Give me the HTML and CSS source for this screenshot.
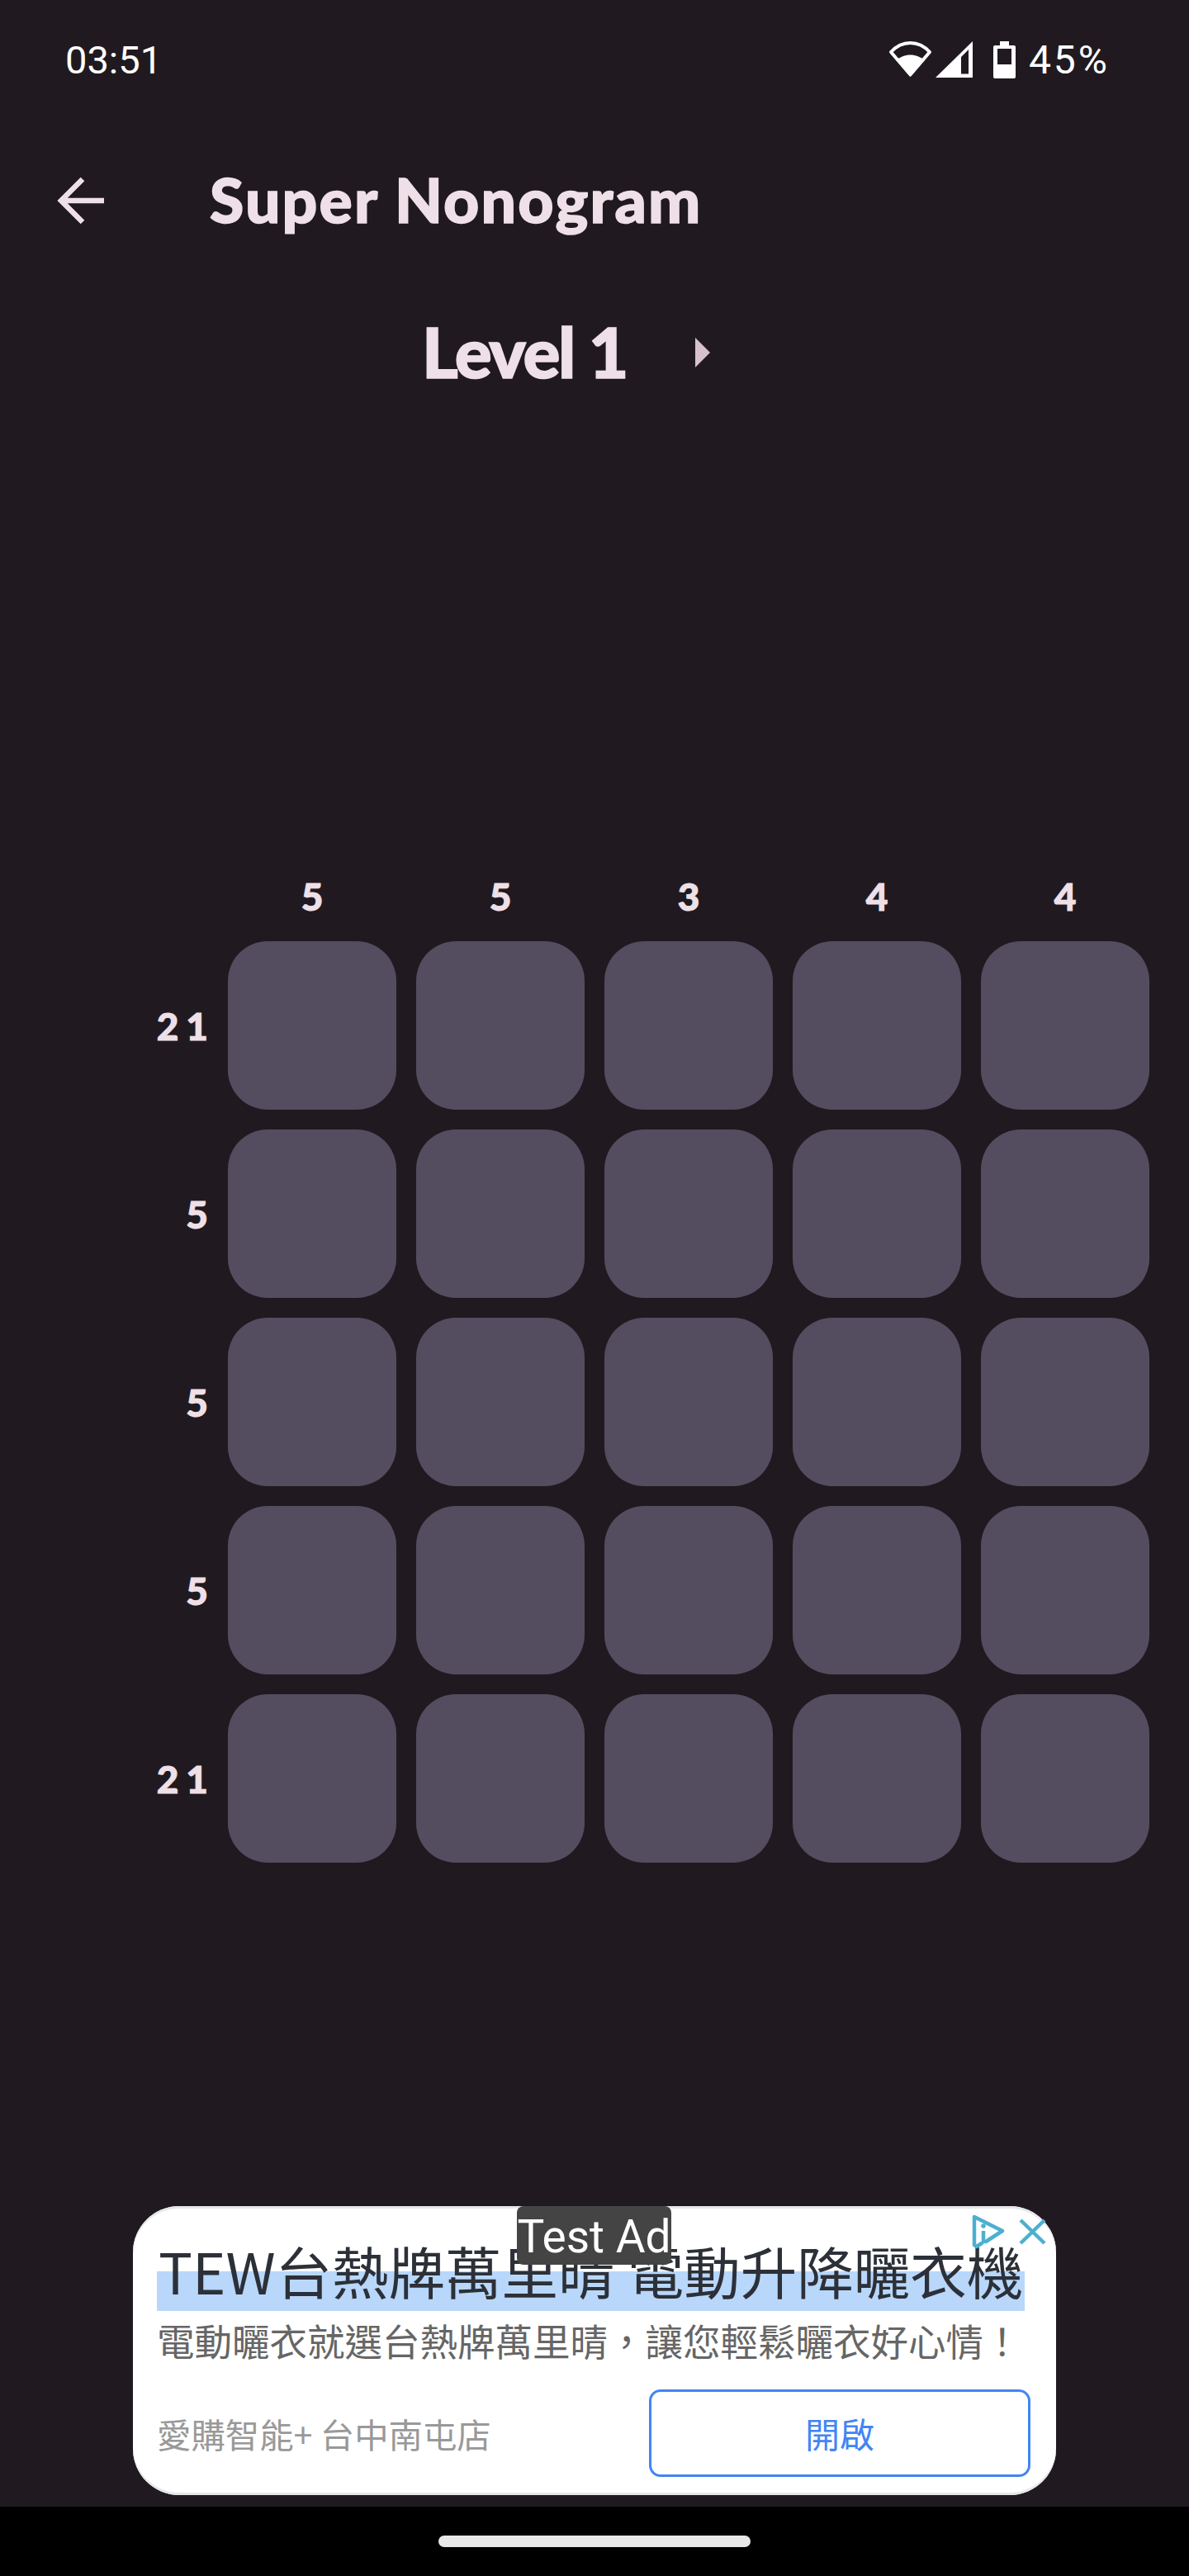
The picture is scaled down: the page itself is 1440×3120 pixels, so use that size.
FILE: index.html
```html
<!DOCTYPE html>
<html>

<head>
    <meta name="viewport" content="width=device-width, initial-scale=1, user-scalable=no"/>
    <link rel="stylesheet" href="styles.css">
</head>

<body>
    <div class="status-bar">
        <span class="clock">03:51</span>
        <div class="status-icons">
            <svg class="icon-wifi" width="53" height="44" viewBox="0 0 53 44">
                <path d="M26.5 40.5 3 13C9 6.500 17.500 2 26.500 2S44 6.500 50 13Z" fill="none" stroke="#fff" stroke-width="4" stroke-linejoin="round"/>
                <path d="M26.500 43 9.500 23C14 19 20 16.500 26.500 16.500S39 19 43.500 23Z" fill="#fff"/>
            </svg>
            <svg class="icon-signal" width="45" height="44" viewBox="0 0 45 44">
                <path d="M0 44 45 0V44ZM31 39.500H40V10L31 19Z" fill="#fff" fill-rule="evenodd"/>
            </svg>
            <svg class="icon-battery" width="27" height="45" viewBox="0 0 27 45">
                <path d="M8 0h11v5h6a2 2 0 0 1 2 2v36a2 2 0 0 1-2 2H2a2 2 0 0 1-2-2V7a2 2 0 0 1 2-2h6Z" fill="#fff"/>
                <rect x="5" y="9" width="17" height="19" fill="#201a20"/>
            </svg>
            <span class="battery-text">45%</span>
        </div>
    </div>

    <header class="app-bar">
        <svg class="back" width="58" height="58" viewBox="0 0 58 58">
            <path d="M57 29H5M31 3 5 29l26 26" fill="none" stroke="#efe0e8" stroke-width="6.500"/>
        </svg>
        <h1>Super Nonogram</h1>
    </header>

    <div class="level-row">
        <span class="level">Level 1</span>
        <span class="next"></span>
    </div>

    <main class="board">
        <div class="col-hints">
            <span>5</span>
            <span>5</span>
            <span>3</span>
            <span>4</span>
            <span>4</span>
        </div>
        <div class="row"><span class="hint">2 1</span><i></i><i></i><i></i><i></i><i></i></div>
        <div class="row"><span class="hint">5</span><i></i><i></i><i></i><i></i><i></i></div>
        <div class="row"><span class="hint">5</span><i></i><i></i><i></i><i></i><i></i></div>
        <div class="row"><span class="hint">5</span><i></i><i></i><i></i><i></i><i></i></div>
        <div class="row"><span class="hint">2 1</span><i></i><i></i><i></i><i></i><i></i></div>
    </main>

    <section class="ad">
        <div class="ad-label">Test Ad</div>
        <div class="ad-marks">
            <svg width="40" height="42" viewBox="0 0 40 42">
                <path d="M17 33 37 20 3 3V37L5.500 39 12 35" fill="none" stroke="#4cb0d0" stroke-width="4.500" stroke-linejoin="round" stroke-linecap="round"/>
                <circle cx="14" cy="14" r="2.800" fill="#4cb0d0"/>
                <path d="M14 20V35" stroke="#4cb0d0" stroke-width="4.500"/>
            </svg>
            <svg width="33" height="32" viewBox="0 0 33 32">
                <path d="M2 2 31 30M31 2 2 30" stroke="#4cb0d0" stroke-width="4.500"/>
            </svg>
        </div>
        <div class="ad-title">TEW台熱牌萬里晴 電動升降曬衣機</div>
        <div class="ad-desc">電動曬衣就選台熱牌萬里晴，讓您輕鬆曬衣好心情！</div>
        <div class="ad-foot">
            <span class="ad-store">愛購智能+ 台中南屯店</span>
            <span class="ad-btn">開啟</span>
        </div>
    </section>

    <div class="nav-bar"><span class="pill"></span></div>
</body>

</html>
```
FILE: styles.css
```css
* {
    box-sizing: border-box;
}

html, body {
    margin: 0;
    padding: 0;
}

body {
    width: 1440px;
    height: 3120px;
    display: flex;
    flex-direction: column;
    background: #201a20;
    color: #efe0e8;
    font-family: "Lato", "Liberation Sans", sans-serif;
}

.status-bar {
    height: 144px;
    padding: 0 96px 0 79px;
    display: flex;
    justify-content: space-between;
    align-items: center;
    color: #fff;
    font-family: "Roboto", sans-serif;
    font-size: 47px;
}

.status-icons {
    display: flex;
    align-items: center;
}

.icon-signal {
    margin-left: 4px;
}

.icon-battery {
    margin: 0 16px 0 25px;
}

.battery-text {
    font-size: 48px;
    letter-spacing: 3px;
}

.app-bar {
    height: 198px;
    padding-left: 69px;
    display: flex;
    align-items: center;
}

.app-bar h1 {
    margin: 0 0 4px 127px;
    font-size: 75px;
    font-weight: 900;
    letter-spacing: 2.200px;
    -webkit-text-stroke: 1.500px #efe0e8;
}

.level-row {
    height: 170px;
    padding-left: 511px;
    display: flex;
    align-items: center;
    gap: 83px;
}

.level {
    margin-bottom: 4px;
    font-size: 84px;
    font-weight: 900;
    letter-spacing: -2.300px;
    -webkit-text-stroke: 1.500px #efe0e8;
}

.next {
    width: 0;
    height: 0;
    border-left: 18px solid #d8c0cc;
    border-top: 18px solid transparent;
    border-bottom: 18px solid transparent;
}

.board {
    padding-top: 548px;
}

.col-hints {
    display: flex;
    gap: 24px;
    margin-left: 276px;
    height: 52px;
    line-height: 52px;
}

.col-hints span {
    width: 204px;
    text-align: center;
    font-size: 46px;
    font-weight: 900;
    -webkit-text-stroke: 1px #efe0e8;
}

.row {
    display: flex;
    gap: 24px;
    margin-top: 24px;
    align-items: center;
}

.col-hints + .row {
    margin-top: 28px;
}

.row i {
    width: 204px;
    height: 204px;
    border-radius: 48px;
    background: #544d60;
}

.hint {
    width: 252px;
    text-align: right;
    font-size: 46px;
    font-weight: 900;
    word-spacing: -2px;
    -webkit-text-stroke: 1px #efe0e8;
}

.ad {
    position: relative;
    width: 1118px;
    height: 350px;
    margin: 416px 0 0 161px;
    padding: 40px 28px 0 29px;
    background: #fff;
    border-radius: 56px;
    box-shadow: inset 0 3px 0 #e6e8ea, inset 0 -3px 0 #e6e8ea;
    font-family: "Noto Sans CJK TC", sans-serif;
}

.ad-label {
    position: absolute;
    left: 465px;
    top: 0;
    width: 187px;
    height: 71px;
    background: #444;
    border-radius: 8px;
    color: #fff;
    font-family: "Roboto", sans-serif;
    font-size: 55px;
    line-height: 74px;
    text-align: center;
    white-space: nowrap;
}

.ad-marks {
    position: absolute;
    right: 12px;
    top: 10px;
    display: flex;
    gap: 17px;
    align-items: center;
}

.ad-title {
    width: 1051px;
    height: 87px;
    padding-left: 2px;
    line-height: 75px;
    font-size: 68.500px;
    color: #2c3038;
    background: linear-gradient(to bottom, transparent 39px, #b8d7fa 39px);
    white-space: nowrap;
}

.ad-desc {
    margin-top: 5px;
    font-size: 45.500px;
    line-height: 60px;
    color: #666;
    white-space: nowrap;
}

.ad-foot {
    margin-top: 30px;
    display: flex;
    justify-content: space-between;
    align-items: center;
}

.ad-store {
    font-size: 41.400px;
    color: #999;
}

.ad-btn {
    width: 462px;
    height: 106px;
    margin-right: 3px;
    border: 3px solid #4285f4;
    border-radius: 14px;
    color: #4285f4;
    font-size: 42px;
    line-height: 100px;
    text-align: center;
}

.nav-bar {
    width: 1440px;
    height: 84px;
    margin-top: 14px;
    background: #000;
    display: flex;
    justify-content: center;
    padding-top: 35px;
}

.pill {
    width: 378px;
    height: 14px;
    background: #e8e8e8;
    border-radius: 7px;
}
```
